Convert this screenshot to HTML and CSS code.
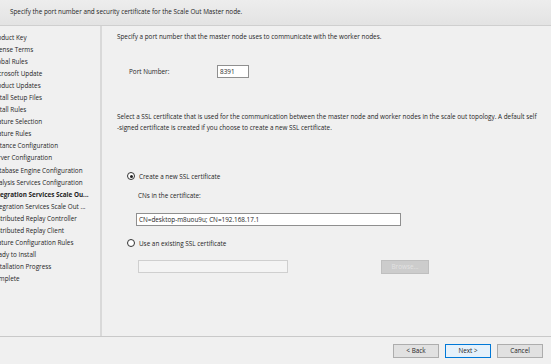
FILE: index.html
```html
<!DOCTYPE html>
<html>
<head>
<meta charset="utf-8">
<link rel="stylesheet" href="styles.css">
</head>
<body>
<div class="window">
  <div class="header">Specify the port number and security certificate for the Scale Out Master node.</div>
  <div class="main">
    <div class="nav">
      <div class="nav-item">Product Key</div>
      <div class="nav-item">License Terms</div>
      <div class="nav-item">Global Rules</div>
      <div class="nav-item">Microsoft Update</div>
      <div class="nav-item">Product Updates</div>
      <div class="nav-item">Install Setup Files</div>
      <div class="nav-item">Install Rules</div>
      <div class="nav-item">Feature Selection</div>
      <div class="nav-item">Feature Rules</div>
      <div class="nav-item">Instance Configuration</div>
      <div class="nav-item">Server Configuration</div>
      <div class="nav-item">Database Engine Configuration</div>
      <div class="nav-item">Analysis Services Configuration</div>
      <div class="nav-item active">Integration Services Scale Ou...</div>
      <div class="nav-item">Integration Services Scale Out ...</div>
      <div class="nav-item">Distributed Replay Controller</div>
      <div class="nav-item">Distributed Replay Client</div>
      <div class="nav-item">Feature Configuration Rules</div>
      <div class="nav-item">Ready to Install</div>
      <div class="nav-item">Installation Progress</div>
      <div class="nav-item">Complete</div>
    </div>
    <div class="content">
      <p class="intro">Specify a port number that the master node uses to communicate with the worker nodes.</p>
      <div class="port-row">
        <span class="port-label">Port Number:</span>
        <span class="textbox port-box">8391</span>
      </div>
      <p class="ssl-desc">Select a SSL certificate that is used for the communication between the master node and worker nodes in the scale out topology. A default self -&#8288;signed certificate is created if you choose to create a new SSL certificate.</p>
      <div class="radio-row first">
        <span class="radio checked"></span>
        <span>Create a new SSL certificate</span>
      </div>
      <div class="cn-label">CNs in the certificate:</div>
      <div class="textbox cn-box">CN=desktop-m8uou9u; CN=192.168.17.1</div>
      <div class="radio-row second">
        <span class="radio"></span>
        <span>Use an existing SSL certificate</span>
      </div>
      <div class="existing-row">
        <div class="textbox disabled-box"></div>
        <div class="browse">Browse...</div>
      </div>
    </div>
  </div>
  <div class="footer">
    <div class="btn">&lt; Back</div>
    <div class="btn primary">Next &gt;</div>
    <div class="btn">Cancel</div>
  </div>
</div>
</body>
</html>
```
FILE: styles.css
```css
* { box-sizing: border-box; }
html, body { margin: 0; padding: 0; }
body {
  background: #f0f0f0;
  font-family: "Open Sans", "Noto Sans", sans-serif;
  font-size: 6.35px;
  color: #1e1e1e;
  width: 551px;
  height: 364px;
  overflow: hidden;
}
.window { width: 551px; height: 364px; display: flex; flex-direction: column; }
.header {
  height: 26px;
  background: linear-gradient(#ededed, #e3e3e3);
  border-bottom: 1px solid #cfcfcf;
  padding: 7px 0 0 10px;
  line-height: 10px;
}
.main { display: flex; height: 311px; border-bottom: 1px solid #c9c9c9; }
.nav {
  width: 102px;
  border-right: 2px solid #d9d9d9;
  padding-top: 6px;
  overflow: hidden;
  white-space: nowrap;
}
.nav-item { line-height: 12.05px; height: 12.05px; margin-left: -9px; }
.nav-item.active { font-weight: 700; }
.content { flex: 1; padding: 5px 0 0 15px; }
p { margin: 0; }
.intro { line-height: 12px; }
.port-row { display: flex; align-items: center; margin-top: 22px; height: 13px; }
.port-label { margin-left: 12px; width: 88px; }
.textbox {
  background: #fff;
  border: 1px solid #8f8f8f;
  height: 13px;
  line-height: 11px;
  padding-left: 2px;
}
.port-box { width: 32px; }
.ssl-desc { margin-top: 33px; line-height: 11px; padding-right: 8px; }
.radio-row { display: flex; align-items: center; height: 12px; margin-left: 10px; }
.radio-row.first { margin-top: 37px; }
.radio {
  width: 8px; height: 8px; border-radius: 50%;
  border: 1px solid #333; background: #fff;
  margin-right: 4px; position: relative;
}
.radio.checked::after {
  content: ""; position: absolute; left: 1.5px; top: 1.5px;
  width: 3px; height: 3px; border-radius: 50%; background: #222;
}
.cn-label { margin: 8px 0 0 21px; line-height: 12px; }
.cn-box { margin: 11px 0 0 19px; width: 265px; }
.radio-row.second { margin-top: 11px; }
.existing-row { display: flex; margin-top: 11px; margin-left: 21px; }
.disabled-box { width: 150px; background: #f4f4f4; border-color: #cfcfcf; }
.browse {
  margin-left: 93px; width: 48px; height: 14px;
  background: #cccccc; border: 1px solid #bfbfbf;
  color: #e2e2e2; text-align: center; line-height: 12px;
}
.footer { display: flex; justify-content: flex-end; gap: 6px; padding: 7px 8px 0 0; }
.btn {
  width: 46px; height: 14px;
  background: #e1e1e1; border: 1px solid #adadad;
  text-align: center; line-height: 12px;
}
.btn.primary { background: #e5f1fb; border-color: #0078d7; }
```
